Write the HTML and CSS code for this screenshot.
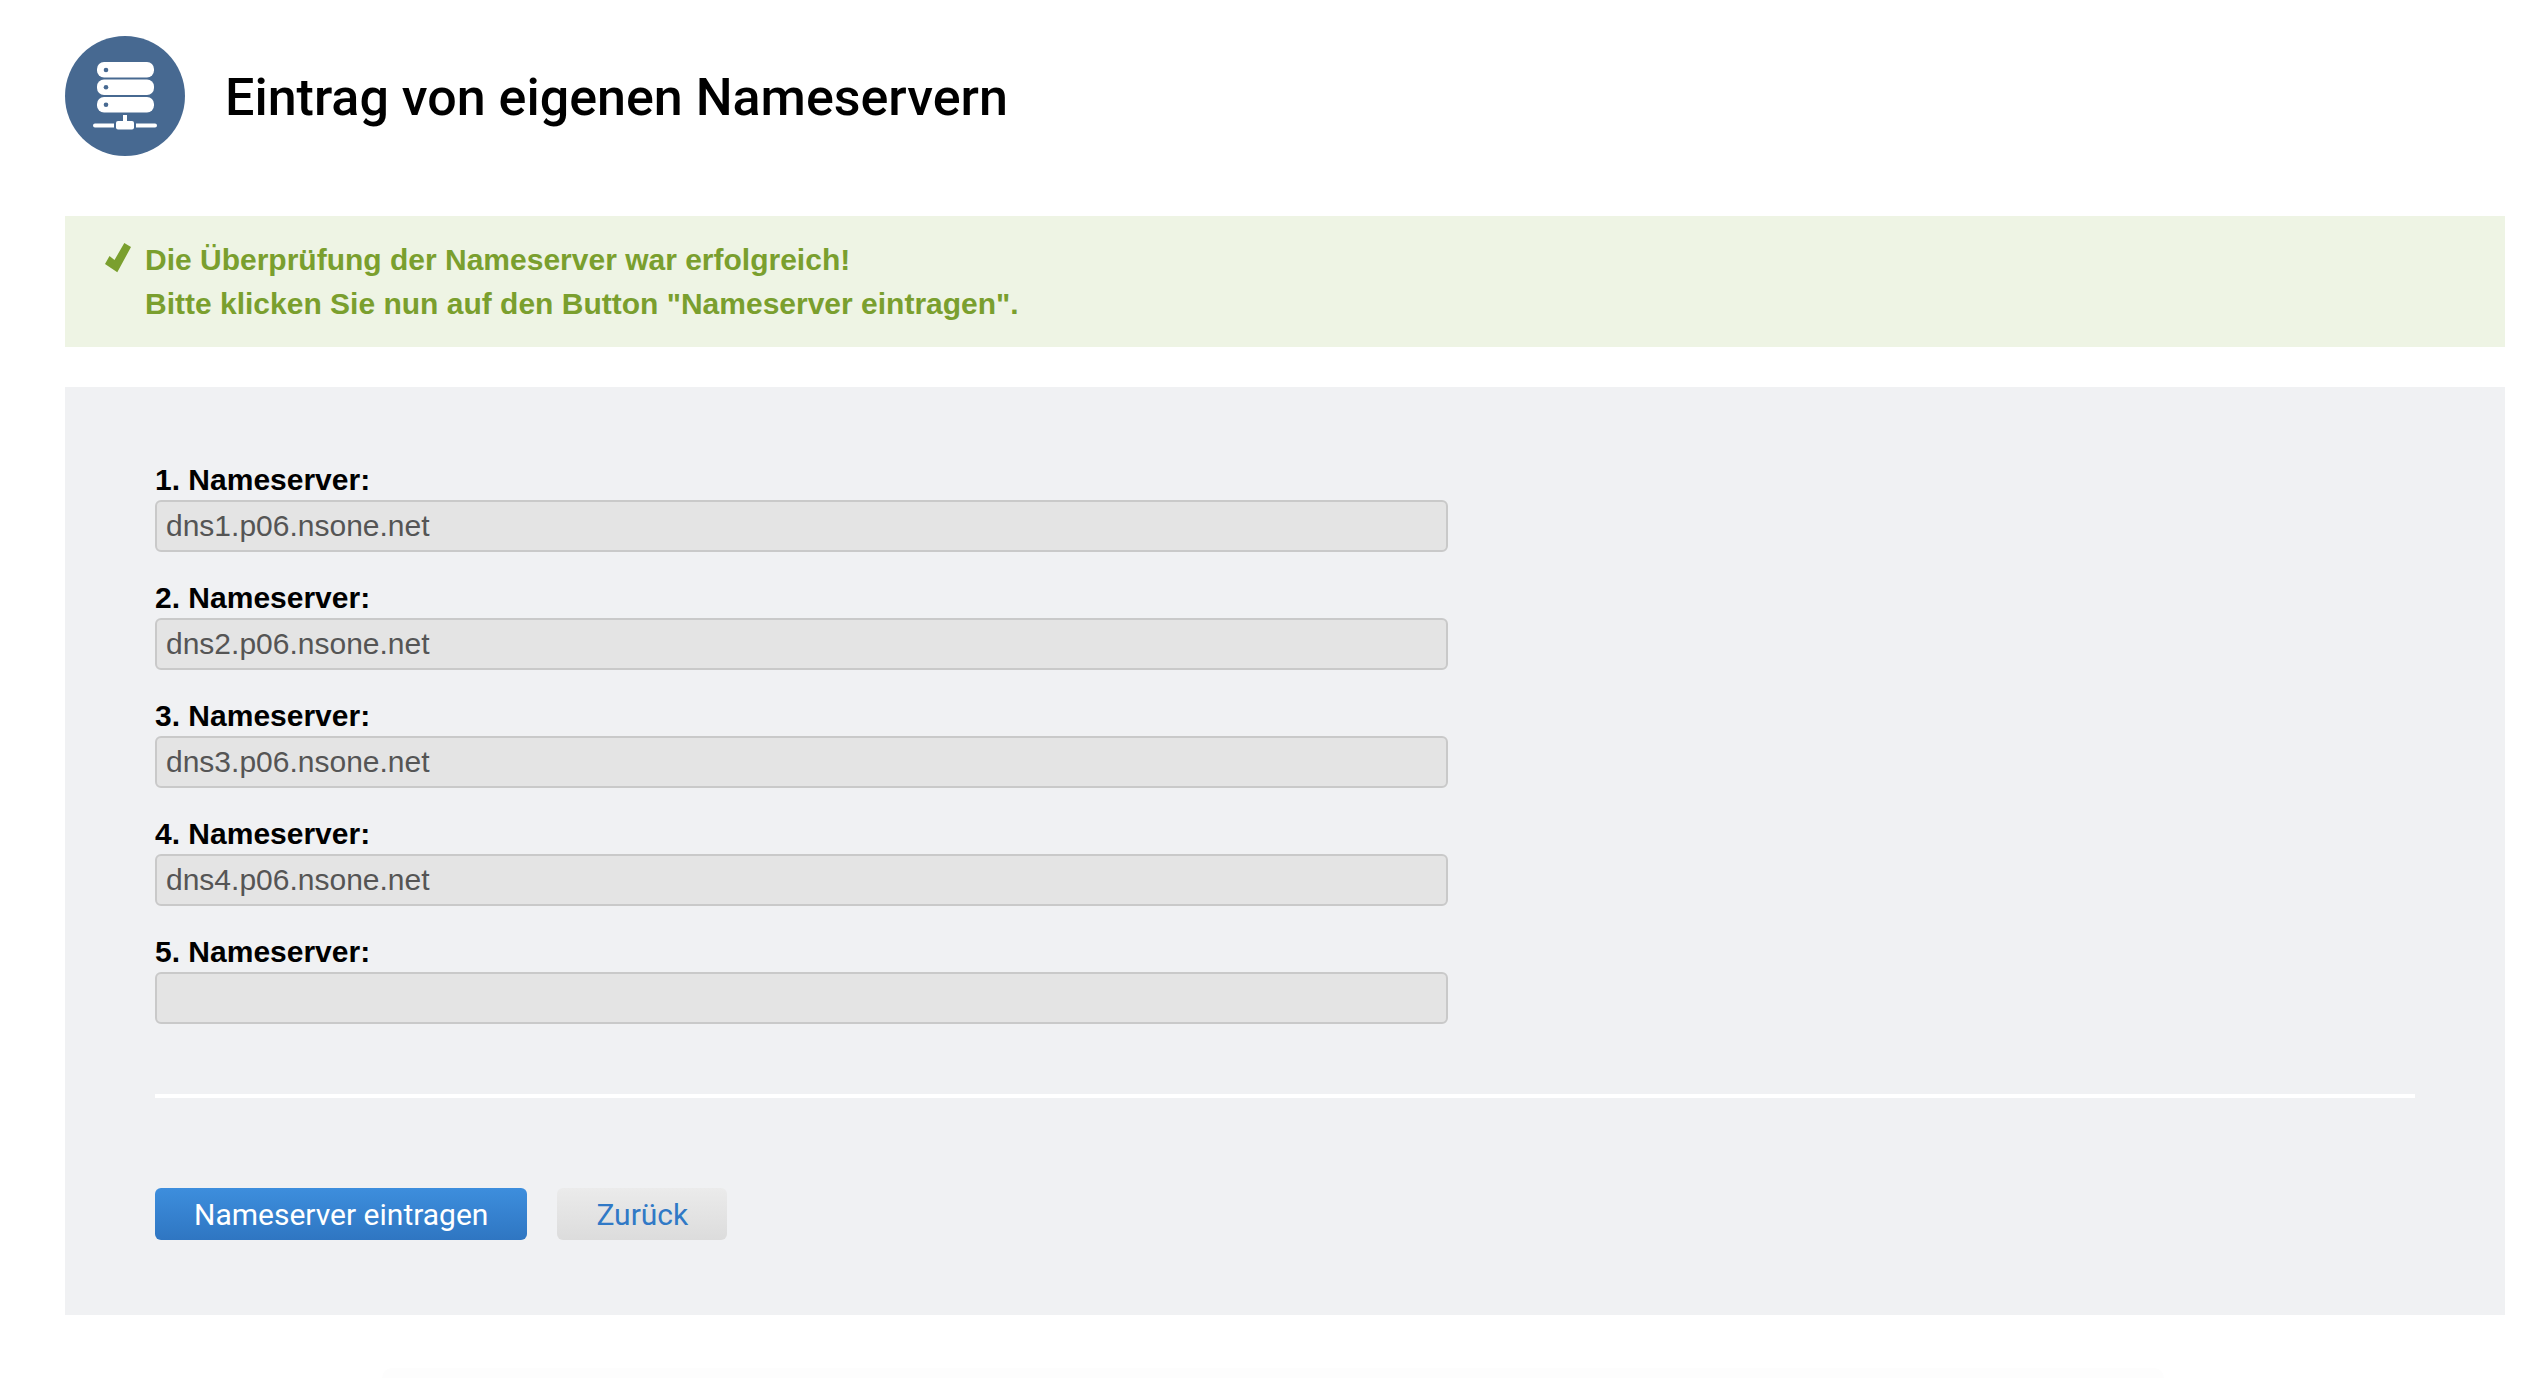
FILE: index.html
```html
<!DOCTYPE html>
<html lang="de">
<head>
<meta charset="utf-8">
<title>Eintrag von eigenen Nameservern</title>
<meta name="viewport" content="width=device-width, initial-scale=1">
<link rel="stylesheet" href="styles.css">
</head>
<body>
<main class="page">
  <header class="page-header">
    <svg class="page-icon" viewBox="0 0 120 120" aria-hidden="true">
      <circle cx="60" cy="60" r="60" fill="#476991"/>
      <g fill="#fff">
        <rect x="32" y="26" width="57" height="15.500" rx="7"/>
        <rect x="32" y="43.500" width="57" height="15.500" rx="7"/>
        <rect x="32" y="61" width="57" height="15.500" rx="7"/>
        <rect x="58" y="79" width="4" height="8"/>
        <rect x="51" y="85" width="18" height="8.500" rx="2"/>
        <path d="M30 87.500h19v4H30a2 2 0 0 1 0-4zM71 87.500h19a2 2 0 0 1 0 4H71z"/>
      </g>
      <g fill="#476991">
        <circle cx="41" cy="34" r="2.300"/>
        <circle cx="41" cy="51.300" r="2.300"/>
        <circle cx="41" cy="68.700" r="2.300"/>
      </g>
    </svg>
    <h1 class="page-title">Eintrag von eigenen Nameservern</h1>
  </header>

  <div class="notice" role="status">
    <svg class="notice-icon" viewBox="0 0 26 30" aria-hidden="true">
      <path d="M0 21L4.500 13L9.500 17L19.300 0L26 4L12.300 29.300Z" fill="#7a9f2e"/>
    </svg>
    <p class="notice-text">Die Überprüfung der Nameserver war erfolgreich!<br>Bitte klicken Sie nun auf den Button "Nameserver eintragen".</p>
  </div>

  <form class="panel">
    <div class="fields">
      <div class="field">
        <label class="field-label" for="ns1">1. Nameserver:</label>
        <input class="field-input" id="ns1" type="text" value="dns1.p06.nsone.net" readonly>
      </div>
      <div class="field">
        <label class="field-label" for="ns2">2. Nameserver:</label>
        <input class="field-input" id="ns2" type="text" value="dns2.p06.nsone.net" readonly>
      </div>
      <div class="field">
        <label class="field-label" for="ns3">3. Nameserver:</label>
        <input class="field-input" id="ns3" type="text" value="dns3.p06.nsone.net" readonly>
      </div>
      <div class="field">
        <label class="field-label" for="ns4">4. Nameserver:</label>
        <input class="field-input" id="ns4" type="text" value="dns4.p06.nsone.net" readonly>
      </div>
      <div class="field">
        <label class="field-label" for="ns5">5. Nameserver:</label>
        <input class="field-input" id="ns5" type="text" readonly>
      </div>
    </div>
    <hr class="divider">
    <div class="actions">
      <button class="button button-primary" type="submit">Nameserver eintragen</button>
      <button class="button button-secondary" type="button">Zurück</button>
    </div>
  </form>
</main>
<div class="page-end"></div>
</body>
</html>
```

FILE: styles.css
```css
* {
  box-sizing: border-box;
}

body {
  margin: 0;
  background: #fff;
  color: #000;
  font-family: "Liberation Sans", Arial, sans-serif;
  font-size: 30px;
  line-height: 44px;
}

.page {
  display: flex;
  flex-direction: column;
  gap: 40px;
  padding: 36px 41px 53px 65px;
}

.page-header {
  display: flex;
  align-items: center;
  gap: 40px;
  margin-bottom: 20px;
}

.page-icon {
  flex: none;
  width: 120px;
  height: 120px;
}

.page-title {
  margin: 0;
  padding-top: 3px;
  font-family: Roboto, sans-serif;
  font-size: 52px;
  font-weight: 500;
  line-height: 60px;
}

.notice {
  display: flex;
  gap: 14px;
  padding: 22px 40px 21px;
  background: #eef4e4;
  color: #7a9f2e;
  font-weight: 700;
}

.notice-icon {
  flex: none;
  width: 26px;
  height: 30px;
  margin-top: 5px;
}

.notice-text {
  margin: 0;
}

.panel {
  padding: 73px 90px 75px;
  background: #f0f1f3;
}

.fields {
  display: flex;
  flex-direction: column;
  gap: 26px;
  max-width: 1293px;
}

.field {
  display: flex;
  flex-direction: column;
}

.field-label {
  font-weight: 700;
  line-height: 40px;
}

.field-input {
  width: 100%;
  height: 52px;
  padding: 0 9px;
  border: 2px solid #c9c9c9;
  border-radius: 6px;
  background: #e4e4e4;
  color: #555;
  font: inherit;
}

.divider {
  height: 4px;
  margin: 70px 0 90px;
  border: 0;
  background: #fff;
}

.actions {
  display: flex;
  gap: 30px;
}

.button {
  height: 52px;
  padding: 2px 39px 0;
  border: 0;
  border-radius: 6px;
  font-family: Roboto, sans-serif;
  font-size: 30px;
  line-height: 50px;
}

.button-primary {
  background: linear-gradient(#3d8edd, #2f76c2);
  color: #fff;
}

.button-secondary {
  background: linear-gradient(#ebebeb, #dcdcdc);
  color: #3079c6;
}

/* top edge of the faint area that closes the page */
.page-end {
  width: 70%;
  height: 10px;
  margin: 0 auto;
  border-radius: 20px 20px 0 0;
  background: #fdfdfd;
}
```
